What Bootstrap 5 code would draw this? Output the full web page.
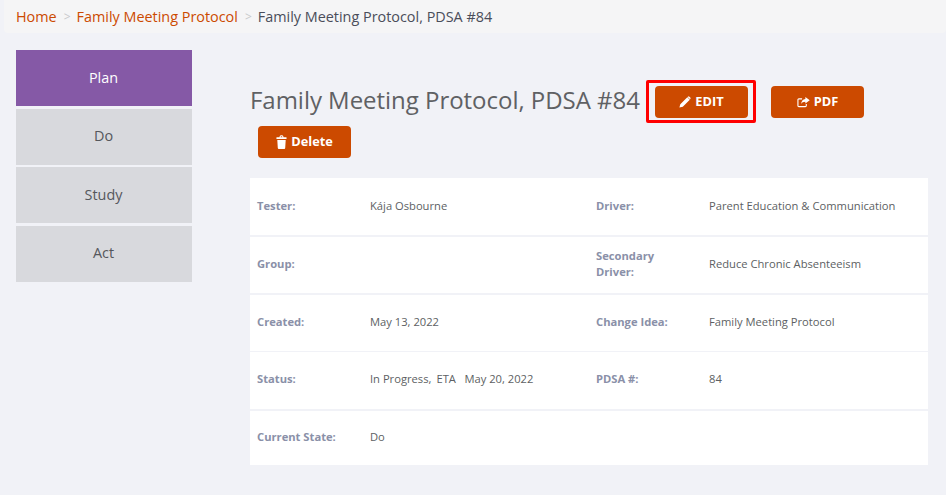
<!DOCTYPE html>
<html lang="en">
<head>
<meta charset="utf-8">
<title>Family Meeting Protocol, PDSA #84</title>
<link href="https://cdn.jsdelivr.net/npm/bootstrap@5.3.0/dist/css/bootstrap.min.css" rel="stylesheet">
<style>
html,body{height:100%}
body{background:#f1f2f7;font-family:"Open Sans","Liberation Sans",sans-serif;color:#5a5c60;overflow:hidden}
.crumbs{margin:0 0 0 4px;padding:0 0 0 12px;height:33px;background:#f5f5f6;font-size:14.4px;align-items:center;border-radius:0 0 4px 4px}
.crumbs a{color:#cc4a00;text-decoration:none}
.crumbs .breadcrumb-item{line-height:33px}
.crumbs .breadcrumb-item.active{color:#4a4d5a}
.crumbs .breadcrumb-item+.breadcrumb-item{padding-left:7px}
.crumbs .breadcrumb-item+.breadcrumb-item::before{content:">";color:#c8c9cc;padding-right:6px;font-size:12px}
.shell{padding:17px 18px 0 16px;gap:58px}
.sidenav{width:176px;flex:none}
.stage{display:block;height:56px;line-height:54px;padding-right:1px;text-align:center;font-size:14.4px;color:#55575c;background:#d8d9dd;text-decoration:none;margin-bottom:2.4px}
.stage:nth-child(3){line-height:55px}
.stage.on{background:#8559a6;color:#fff;font-weight:500;line-height:55px;margin-bottom:3px}
.main-col{min-width:0;flex:1}
.head-row{padding-top:30px;height:128px;align-content:flex-start}
.page-name{font-size:24px;font-weight:400;color:#5f6164;margin:0;line-height:40px;height:40px;width:390px;white-space:nowrap;letter-spacing:-.03px}
.act{width:93px;height:32px;background:#cc4a00;border:0;border-radius:4px;color:#fff;font-size:12.8px;font-weight:700;padding:0;display:inline-flex;align-items:center;justify-content:center;gap:4px}
.act:hover{background:#cc4a00;color:#fff}
.act svg{fill:#fff;flex:none}
.hilite{border:3px solid #f00;border-radius:2px;padding:3px 5px 3px 6px;margin:0 15px 0 6px;display:flex;height:43px}
.pdf-btn{margin-top:6px}
.del-wrap{margin:3px 0 0 8px}
.info{background:#fff;width:678px}
.info table{margin:0;table-layout:fixed;width:100%;--bs-table-bg:transparent}
.info td{height:58px;padding:0 7px 2px;vertical-align:middle;border-bottom:2px solid #f1f2f7;font-size:11.2px;color:#5d5f63;line-height:16px}
.info tr:nth-child(3) td{height:57.5px;border-bottom-width:1px}
.info tr:last-child td{border-bottom:0;height:55px}
.info td.key{font-weight:700;color:#8a90a8;padding-right:15px}
.info col.ck{width:113px}
.info col.cv{width:226px}
.eta-a{margin-left:5px}
.eta-b{margin-left:8.5px}
</style>
</head>
<body>
<nav aria-label="breadcrumb">
<ol class="breadcrumb crumbs">
<li class="breadcrumb-item"><a href="#">Home</a></li>
<li class="breadcrumb-item"><a href="#">Family Meeting Protocol</a></li>
<li class="breadcrumb-item active" aria-current="page">Family Meeting Protocol, PDSA #84</li>
</ol>
</nav>
<div class="d-flex shell">
<div class="sidenav">
<a class="stage on" href="#">Plan</a>
<a class="stage" href="#">Do</a>
<a class="stage" href="#">Study</a>
<a class="stage" href="#">Act</a>
</div>
<div class="main-col">
<div class="d-flex flex-wrap head-row">
<h1 class="page-name">Family Meeting Protocol, PDSA #84</h1>
<div class="hilite"><button class="btn act" type="button"><svg width="12" height="12" viewBox="0 0 12 12"><path d="M.4 11.6l.9-3.4 7-7 2.500 2.500-7 7zM9 .7a1 1 0 0 1 1.400 0l.9.9a1 1 0 0 1 0 1.400l-.3.3L8.600 1z"/></svg>EDIT</button></div>
<button class="btn act pdf-btn" type="button"><svg width="13" height="12" viewBox="0 0 14 12"><path fill="none" stroke="#fff" stroke-width="1.200" d="M5.500 2.600H2a1 1 0 0 0-1 1V10a1 1 0 0 0 1 1h7a1 1 0 0 0 1-1V8.200"/><path d="M9 .6l4.700 3.400L9 7.500V5.700c-2.300 0-3.800.8-4.500 2.600C4.500 5.300 6.300 3.100 9 2.800z"/></svg>PDF</button>
<div class="del-wrap w-100"><button class="btn act" type="button"><svg width="11" height="14" viewBox="0 0 11 14"><path fill-rule="evenodd" d="M3.500 2.200C3.600.9 4.400.3 5.500.3s1.900.6 2 1.900H10a.7.7 0 0 1 .7.7v.3a.7.7 0 0 1-.7.7H1a.7.7 0 0 1-.7-.7v-.3a.7.7 0 0 1 .7-.7zm1 0h2c-.1-.6-.5-.9-1-.9s-.9.3-1 .9zM1.300 5h8.400l-.5 7.900a1 1 0 0 1-1 1H2.800a1 1 0 0 1-1-1z"/></svg>Delete</button></div>
</div>
<div class="info">
<table class="table table-borderless">
<colgroup><col class="ck"><col class="cv"><col class="ck"><col class="cv"></colgroup>
<tbody>
<tr><td class="key">Tester:</td><td>Kája Osbourne</td><td class="key">Driver:</td><td>Parent Education &amp; Communication</td></tr>
<tr><td class="key">Group:</td><td></td><td class="key">Secondary Driver:</td><td>Reduce Chronic Absenteeism</td></tr>
<tr><td class="key">Created:</td><td>May 13, 2022</td><td class="key">Change Idea:</td><td>Family Meeting Protocol</td></tr>
<tr><td class="key">Status:</td><td>In Progress,<span class="eta-a">ETA</span><span class="eta-b">May 20, 2022</span></td><td class="key">PDSA #:</td><td>84</td></tr>
<tr><td class="key">Current State:</td><td>Do</td><td class="key"></td><td></td></tr>
</tbody>
</table>
</div>
</div>
</div>
</body>
</html>
